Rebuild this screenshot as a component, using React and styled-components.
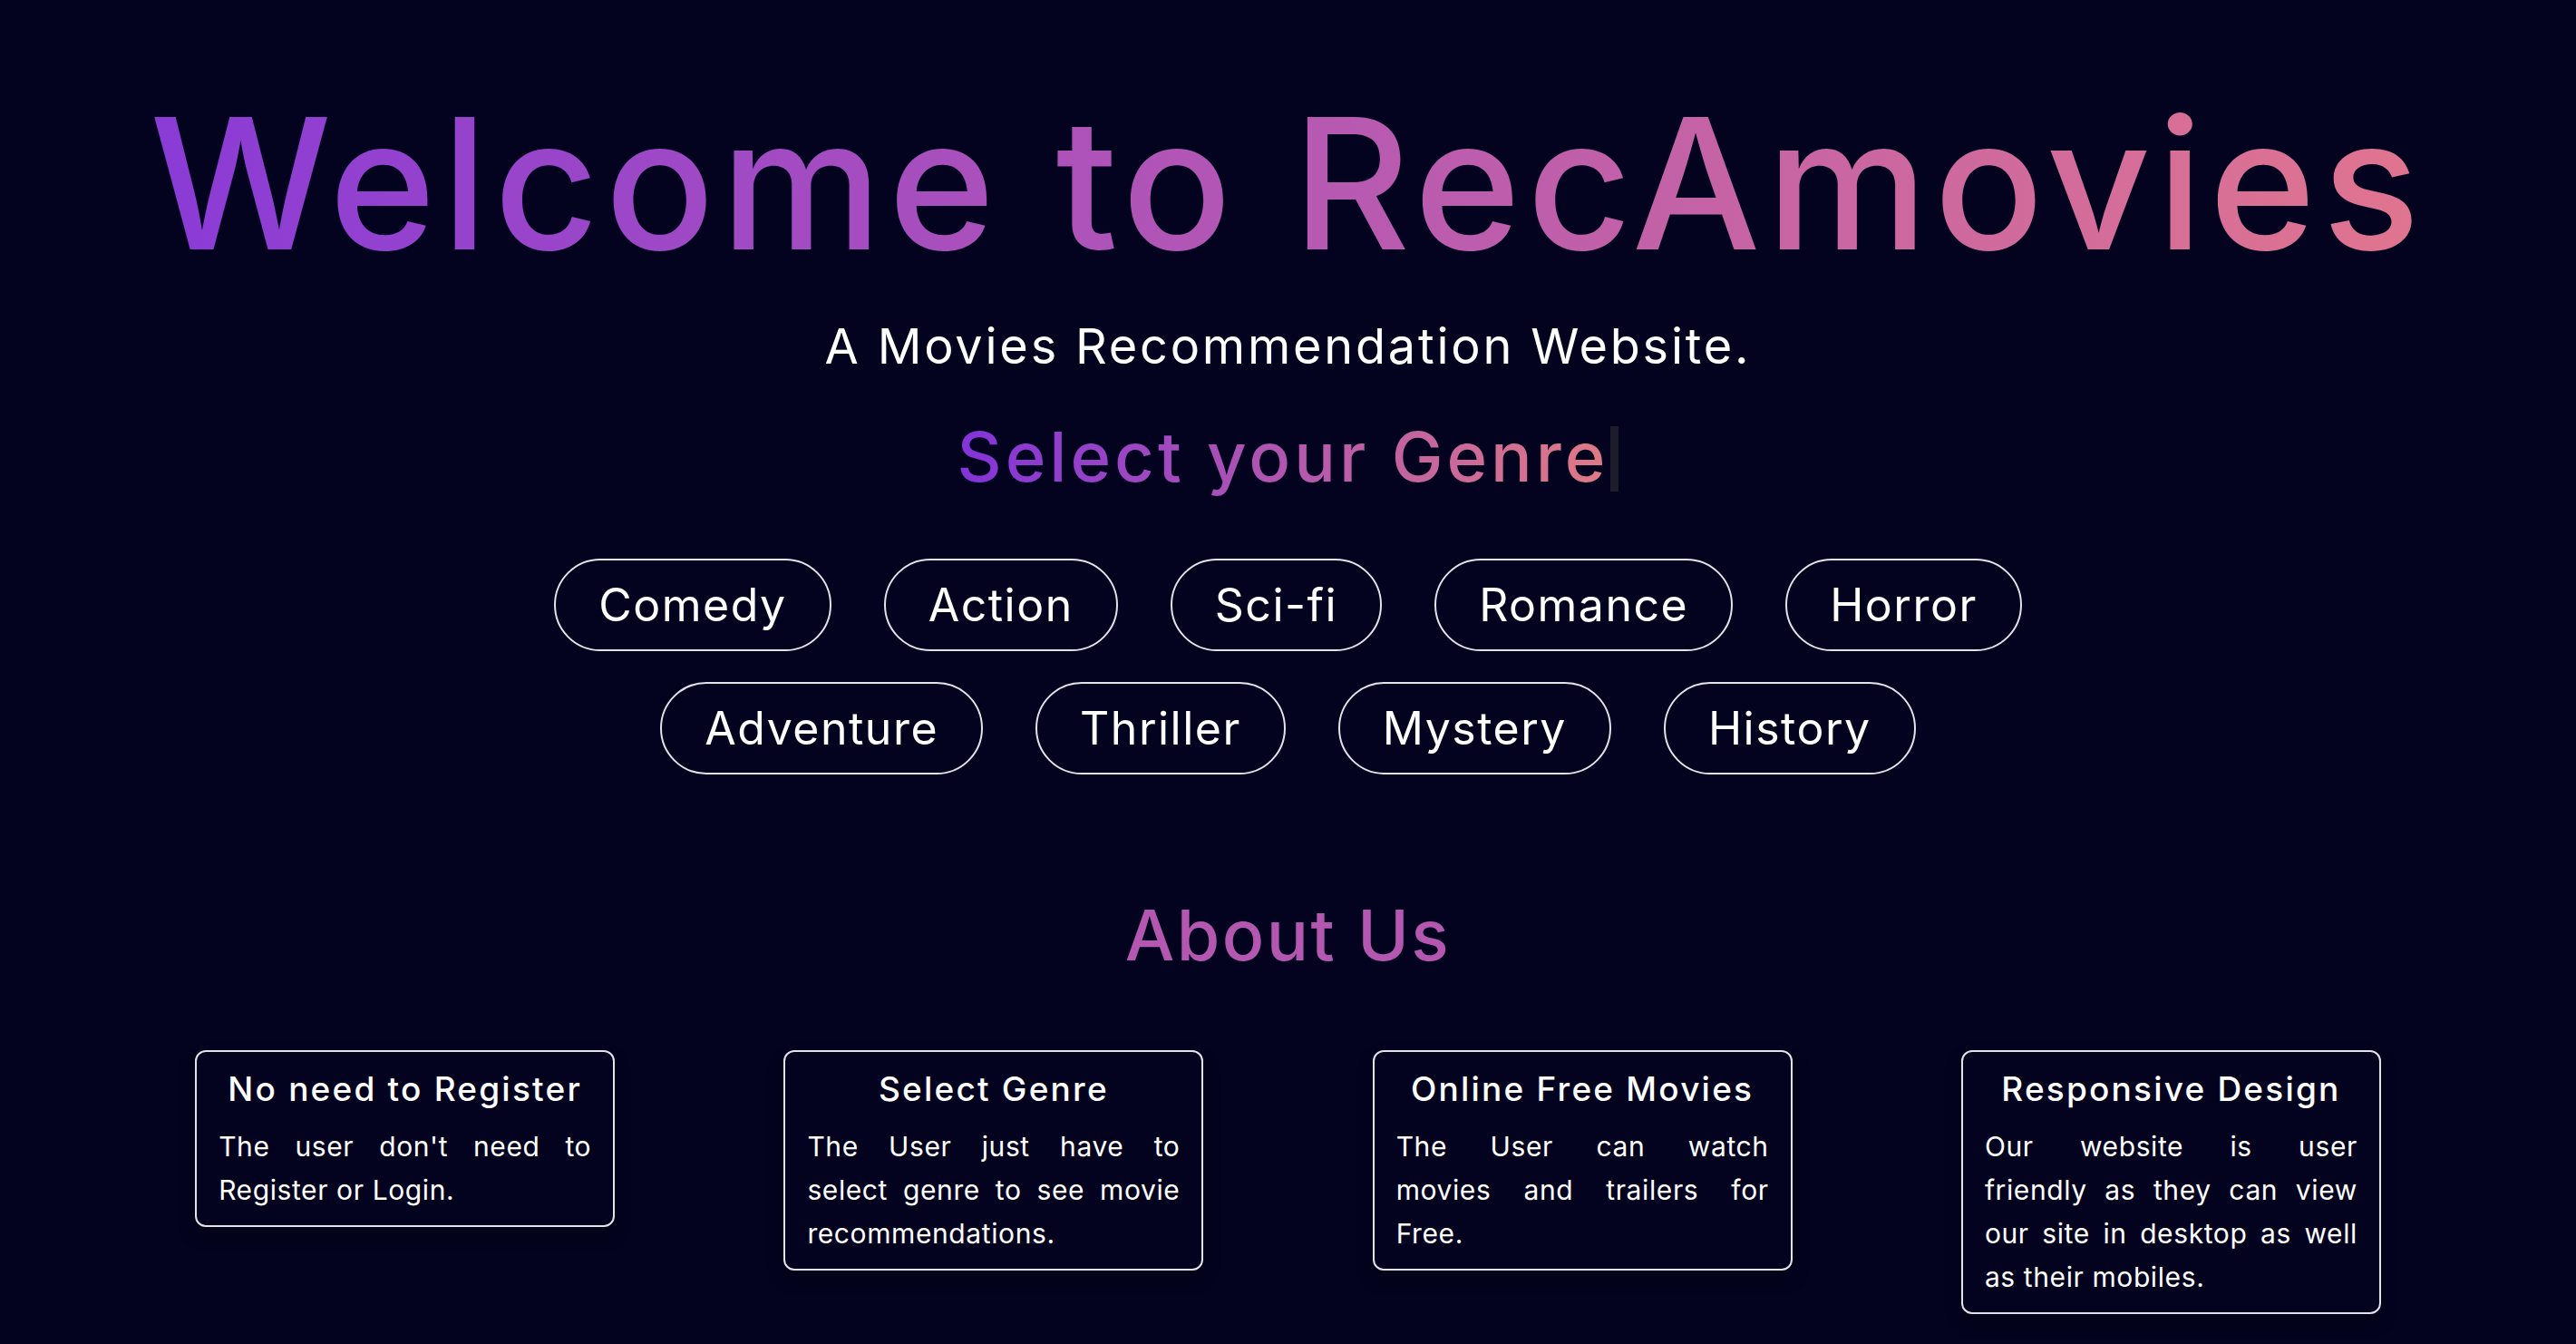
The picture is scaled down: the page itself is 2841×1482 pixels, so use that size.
import React from 'react'
import styled, { createGlobalStyle } from 'styled-components'

const GlobalStyle = createGlobalStyle`
  html, body {
    margin: 0;
    padding: 0;
    background: #03031f;
  }
  body {
    font-family: Inter, "Noto Sans", sans-serif;
    color: #fff;
  }
`

const genres = [
  ['Comedy', 'Action', 'Sci-fi', 'Romance', 'Horror'],
  ['Adventure', 'Thriller', 'Mystery', 'History']
]

// lines kept as in the design so the justified text breaks the same way
const features = [
  {
    title: 'No need to Register',
    lines: ["The user don't need to", 'Register or Login.']
  },
  {
    title: 'Select Genre',
    lines: ['The User just have to', 'select genre to see movie', 'recommendations.']
  },
  {
    title: 'Online Free Movies',
    lines: ['The User can watch', 'movies and trailers for', 'Free.']
  },
  {
    title: 'Responsive Design',
    lines: [
      'Our website is user',
      'friendly as they can view',
      'our site in desktop as well',
      'as their mobiles.'
    ]
  }
]

const Page = styled.div`
  min-height: 100vh;
  background: #03031f;
  padding-top: 82px;
  display: flex;
  flex-direction: column;
  align-items: center;
`

const Title = styled.h1`
  margin: 0;
  font-size: 200px;
  font-weight: 500;
  line-height: 240px;
  letter-spacing: 7px;
  background: linear-gradient(90deg, #8a3bd6, #e0758f);
  -webkit-background-clip: text;
  background-clip: text;
  color: transparent;
`

const Subtitle = styled.p`
  margin: 27px 0 0;
  font-size: 54px;
  line-height: 65px;
  font-weight: 400;
  letter-spacing: 2.8px;
  color: #fff;
`

const GenreHeading = styled.h2`
  margin: 44px 0 0;
  font-size: 76px;
  line-height: 91px;
  font-weight: 500;
  letter-spacing: 4px;
  display: flex;
  align-items: center;
`

const GradientText = styled.span`
  background: linear-gradient(90deg, #8333d9, #e07a86);
  -webkit-background-clip: text;
  background-clip: text;
  color: transparent;
`

const Caret = styled.span`
  display: inline-block;
  width: 9px;
  height: 72px;
  margin-left: 2px;
  margin-top: 4px;
  background: #1c1c2b;
`

const GenreRows = styled.div`
  margin-top: 67px;
  display: flex;
  flex-direction: column;
  align-items: center;
  gap: 34px;
`

const GenreRow = styled.div`
  display: flex;
  gap: 58px;
`

const GenreButton = styled.button`
  height: 102px;
  padding: 0 47px;
  border: 2px solid #e2e2ea;
  border-radius: 51px;
  background: transparent;
  color: #fff;
  font-family: Inter, "Noto Sans", sans-serif;
  font-size: 50px;
  font-weight: 400;
  letter-spacing: 1.5px;
  cursor: pointer;
`

const AboutHeading = styled.h2`
  margin: 131px 0 0;
  font-size: 77px;
  line-height: 92px;
  font-weight: 500;
  letter-spacing: 2.4px;
  color: #b457b0;
`

const Cards = styled.div`
  margin-top: 81px;
  width: 100%;
  box-sizing: border-box;
  padding: 0 122px;
  display: grid;
  grid-template-columns: repeat(4, 1fr);
  justify-items: center;
  align-items: start;
`

const Card = styled.div`
  width: 463px;
  box-sizing: border-box;
  padding: 13px 24px 15px;
  border: 2px solid #e2e2ea;
  border-radius: 12px;
  box-shadow: 0 10px 18px rgba(0, 0, 0, 0.25);
`

const CardTitle = styled.h3`
  margin: 0 0 12px;
  text-align: center;
  font-size: 37px;
  line-height: 55px;
  font-weight: 500;
  letter-spacing: 2.2px;
`

const CardText = styled.p`
  margin: 0;
  font-size: 30px;
  line-height: 48px;
`

const Line = styled.span`
  display: block;
  letter-spacing: 0.6px;
  text-align: ${p => (p.$last ? 'left' : 'justify')};
  text-align-last: ${p => (p.$last ? 'left' : 'justify')};
`

const App = () => {
  return (
    <Page>
      <GlobalStyle />
      <Title>Welcome to RecAmovies</Title>
      <Subtitle>A Movies Recommendation Website.</Subtitle>
      <GenreHeading>
        <GradientText>Select your Genre</GradientText>
        <Caret />
      </GenreHeading>
      <GenreRows>
        {genres.map((row, idx) => (
          <GenreRow key={idx}>
            {row.map(g => (
              <GenreButton key={g}>{g}</GenreButton>
            ))}
          </GenreRow>
        ))}
      </GenreRows>
      <AboutHeading>About Us</AboutHeading>
      <Cards>
        {features.map(f => (
          <Card key={f.title}>
            <CardTitle>{f.title}</CardTitle>
            <CardText>
              {f.lines.map((line, idx) => (
                <Line key={idx} $last={idx === f.lines.length - 1}>{line}</Line>
              ))}
            </CardText>
          </Card>
        ))}
      </Cards>
    </Page>
  )
}

export default App
